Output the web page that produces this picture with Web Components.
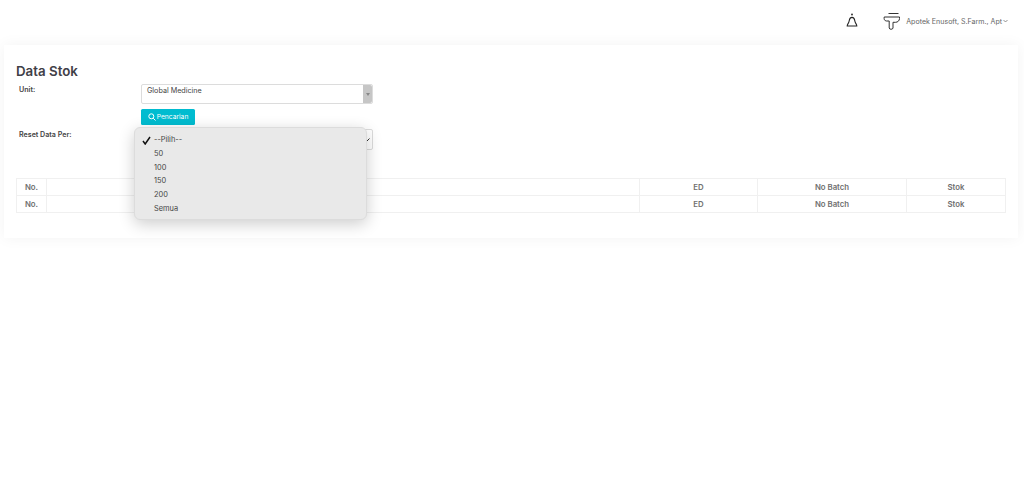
<!DOCTYPE html>
<html>
<head>
<meta charset="utf-8">
<title>Data Stok</title>
<style>
  html, body { margin: 0; height: 100%; background: #fff; }
  body { font-family: "Inter", "Liberation Sans", sans-serif; color: #555; overflow: hidden; }
</style>
</head>
<body>
<app-topbar></app-topbar>
<stock-card></stock-card>
<script>
class AppTopbar extends HTMLElement {
    connectedCallback() {
        this.attachShadow({ mode: 'open' });
        this.shadowRoot.innerHTML = `
            <style>
                :host {
                    display: flex;
                    align-items: center;
                    justify-content: flex-end;
                    height: 41px;
                    padding-right: 16px;
                    background: #fff;
                }
                .bell { width: 14px; height: 15px; margin-right: 24px; }
                .logo { width: 17px; height: 18px; margin-right: 6px; }
                .user { font-size: 7.050px; color: #666; white-space: nowrap; padding-top: 1px; }
                .caret { width: 5px; height: 4px; margin-left: 1px; }
            </style>
            <svg class="bell" viewBox="0 0 14 15" fill="none" stroke="#222" stroke-width="1.100">
                <circle cx="7" cy="1.500" r=".9" fill="#222" stroke="none"/>
                <path d="M2.200 13c0-2 1.700-2.600 2-5.200C4.500 5.500 5.500 4.400 7 4.400s2.500 1.100 2.800 3.400c.3 2.600 2 3.200 2 5.200z"/>
            </svg>
            <svg class="logo" viewBox="0 0 17 18" fill="none" stroke="#333" stroke-width="1">
                <path d="M5.500 1.500h10"/>
                <path d="M1.200 5h15.300v1.500c0 2.200-1.800 3.800-4 3.800H10v5.700c0 1.700-3.800 1.700-3.800 0V9H3.500C1.500 9 .8 7 1.200 5z"/>
            </svg>
            <span class="user">Apotek Enusoft, S.Farm., Apt</span>
            <svg class="caret" viewBox="0 0 5 4" fill="none" stroke="#666" stroke-width=".7"><path d="M.5 1l2 2 2-2"/></svg>
        `;
    }
}

class FormRow extends HTMLElement {
    connectedCallback() {
        this.attachShadow({ mode: 'open' });
        this.shadowRoot.innerHTML = `
            <style>
                :host { display: grid; grid-template-columns: 125px 232px; }
                .label {
                    padding: 1px 0 0 3px;
                    font-size: 7.100px;
                    font-weight: 600;
                    color: #444;
                }
            </style>
            <div class="label">${this.getAttribute('label')}</div>
            <div><slot></slot></div>
        `;
    }
}

class UnitSelect extends HTMLElement {
    connectedCallback() {
        this.attachShadow({ mode: 'open' });
        this.shadowRoot.innerHTML = `
            <style>
                :host {
                    display: flex;
                    height: 20px;
                    border: 1px solid #dcdcdc;
                    border-radius: 2px;
                    box-sizing: border-box;
                    background: #fff;
                }
                .value { flex: 1; padding: 1px 0 0 5px; font-size: 7.200px; line-height: 10px; color: #444; }
                .arrow {
                    width: 9px;
                    display: flex;
                    align-items: center;
                    justify-content: center;
                    background: #c6c6c6;
                    border-radius: 0 2px 2px 0;
                }
                .arrow i {
                    border-top: 3px solid #888;
                    border-left: 2px solid transparent;
                    border-right: 2px solid transparent;
                }
            </style>
            <div class="value"><slot></slot></div>
            <div class="arrow"><i></i></div>
        `;
    }
}

class SearchButton extends HTMLElement {
    connectedCallback() {
        this.attachShadow({ mode: 'open' });
        this.shadowRoot.innerHTML = `
            <style>
                :host {
                    display: inline-flex;
                    align-items: center;
                    justify-content: center;
                    gap: 1px;
                    width: 54px;
                    height: 16px;
                    background: #00bcd0;
                    border-radius: 1.500px;
                    color: #fff;
                    font-size: 6.700px;
                }
                svg { width: 8px; height: 8px; }
            </style>
            <svg viewBox="0 0 8 8" fill="none" stroke="#fff" stroke-width="1"><circle cx="3.300" cy="3.300" r="2.500"/><path d="M5.200 5.200L7.500 7.500"/></svg>
            <slot></slot>
        `;
    }
}

class PerSelect extends HTMLElement {
    connectedCallback() {
        this.attachShadow({ mode: 'open' });
        this.shadowRoot.innerHTML = `
            <style>
                :host {
                    display: flex;
                    align-items: center;
                    justify-content: flex-end;
                    height: 21px;
                    padding-right: 2px;
                    border: 1px solid #dcdcdc;
                    border-radius: 2px;
                    box-sizing: border-box;
                }
                svg { width: 4px; height: 4px; }
            </style>
            <svg viewBox="0 0 4 4" fill="none" stroke="#333" stroke-width="1"><path d="M.5 3.500L3.500.5"/></svg>
        `;
    }
}

class SelectPopup extends HTMLElement {
    connectedCallback() {
        this.attachShadow({ mode: 'open' });
        const items = ['--Pilih--', '50', '100', '150', '200', 'Semua'];
        this.shadowRoot.innerHTML = `
            <style>
                :host {
                    position: absolute;
                    left: 134px;
                    top: 127px;
                    width: 233px;
                    height: 93px;
                    box-sizing: border-box;
                    padding-top: 5px;
                    background: #e9e9e9;
                    border: 1px solid #dcdcdc;
                    border-radius: 6px;
                    box-shadow: 0 4px 16px rgba(0,0,0,.2);
                    z-index: 10;
                }
                .item {
                    position: relative;
                    height: 13.800px;
                    line-height: 13.800px;
                    padding-left: 19px;
                    font-size: 7.400px;
                    color: #444;
                }
                .item:first-child { letter-spacing: .2px; }
                svg { position: absolute; left: 7px; top: 3px; width: 9px; height: 9px; }
            </style>
            ${items.map((t, i) => `<div class="item">${i === 0 ? '<svg viewBox="0 0 9 9" fill="none" stroke="#111" stroke-width="1.500"><path d="M1 5l2.200 3L8 1"/></svg>' : ''}${t}</div>`).join('')}
        `;
    }
}

class DataTable extends HTMLElement {
    connectedCallback() {
        this.attachShadow({ mode: 'open' });
        const row = `
            <div class="cell">No.</div>
            <div class="cell name">Nama Barang</div>
            <div class="cell">ED</div>
            <div class="cell">No Batch</div>
            <div class="cell">Stok</div>`;
        this.shadowRoot.innerHTML = `
            <style>
                :host {
                    display: grid;
                    grid-template-columns: 30px 593px 118px 149px 99px;
                    grid-auto-rows: 17.200px;
                    border-left: 1px solid #f0f0f0;
                    border-top: 1px solid #f0f0f0;
                }
                .cell {
                    display: flex;
                    align-items: center;
                    justify-content: center;
                    border-right: 1px solid #f0f0f0;
                    border-bottom: 1px solid #f0f0f0;
                    font-size: 7.800px;
                    font-weight: 600;
                    color: #707070;
                }
                .name { font-size: 7.200px; }
            </style>
            ${row}${row}
        `;
    }
}

class StockCard extends HTMLElement {
    connectedCallback() {
        this.attachShadow({ mode: 'open' });
        this.shadowRoot.innerHTML = `
            <style>
                :host {
                    display: block;
                    margin: 4px 6px 0 4px;
                    height: 193px;
                    padding: 18px 12px 0;
                    box-sizing: border-box;
                    background: #fff;
                    box-shadow: 0 0 14px rgba(0,0,0,.05);
                }
                h1 {
                    margin: 0 0 5px;
                    height: 16px;
                    line-height: 16px;
                    font-size: 13.300px;
                    font-weight: 600;
                    color: #3f4047;
                }
                .rows { display: flex; flex-direction: column; gap: 5px; }
                search-button { display: flex; }
                form-row.per { margin-top: -1px; }
                data-table { margin-top: 28px; }
            </style>
            <h1>Data Stok</h1>
            <div class="rows">
                <form-row label="Unit:"><unit-select>Global Medicine</unit-select></form-row>
                <form-row label=""><search-button>Pencarian</search-button></form-row>
                <form-row class="per" label="Reset Data Per:"><per-select></per-select></form-row>
            </div>
            <data-table></data-table>
            <select-popup></select-popup>
        `;
    }
}

customElements.define('app-topbar', AppTopbar);
customElements.define('form-row', FormRow);
customElements.define('unit-select', UnitSelect);
customElements.define('search-button', SearchButton);
customElements.define('per-select', PerSelect);
customElements.define('select-popup', SelectPopup);
customElements.define('data-table', DataTable);
customElements.define('stock-card', StockCard);
</script>
</body>
</html>
